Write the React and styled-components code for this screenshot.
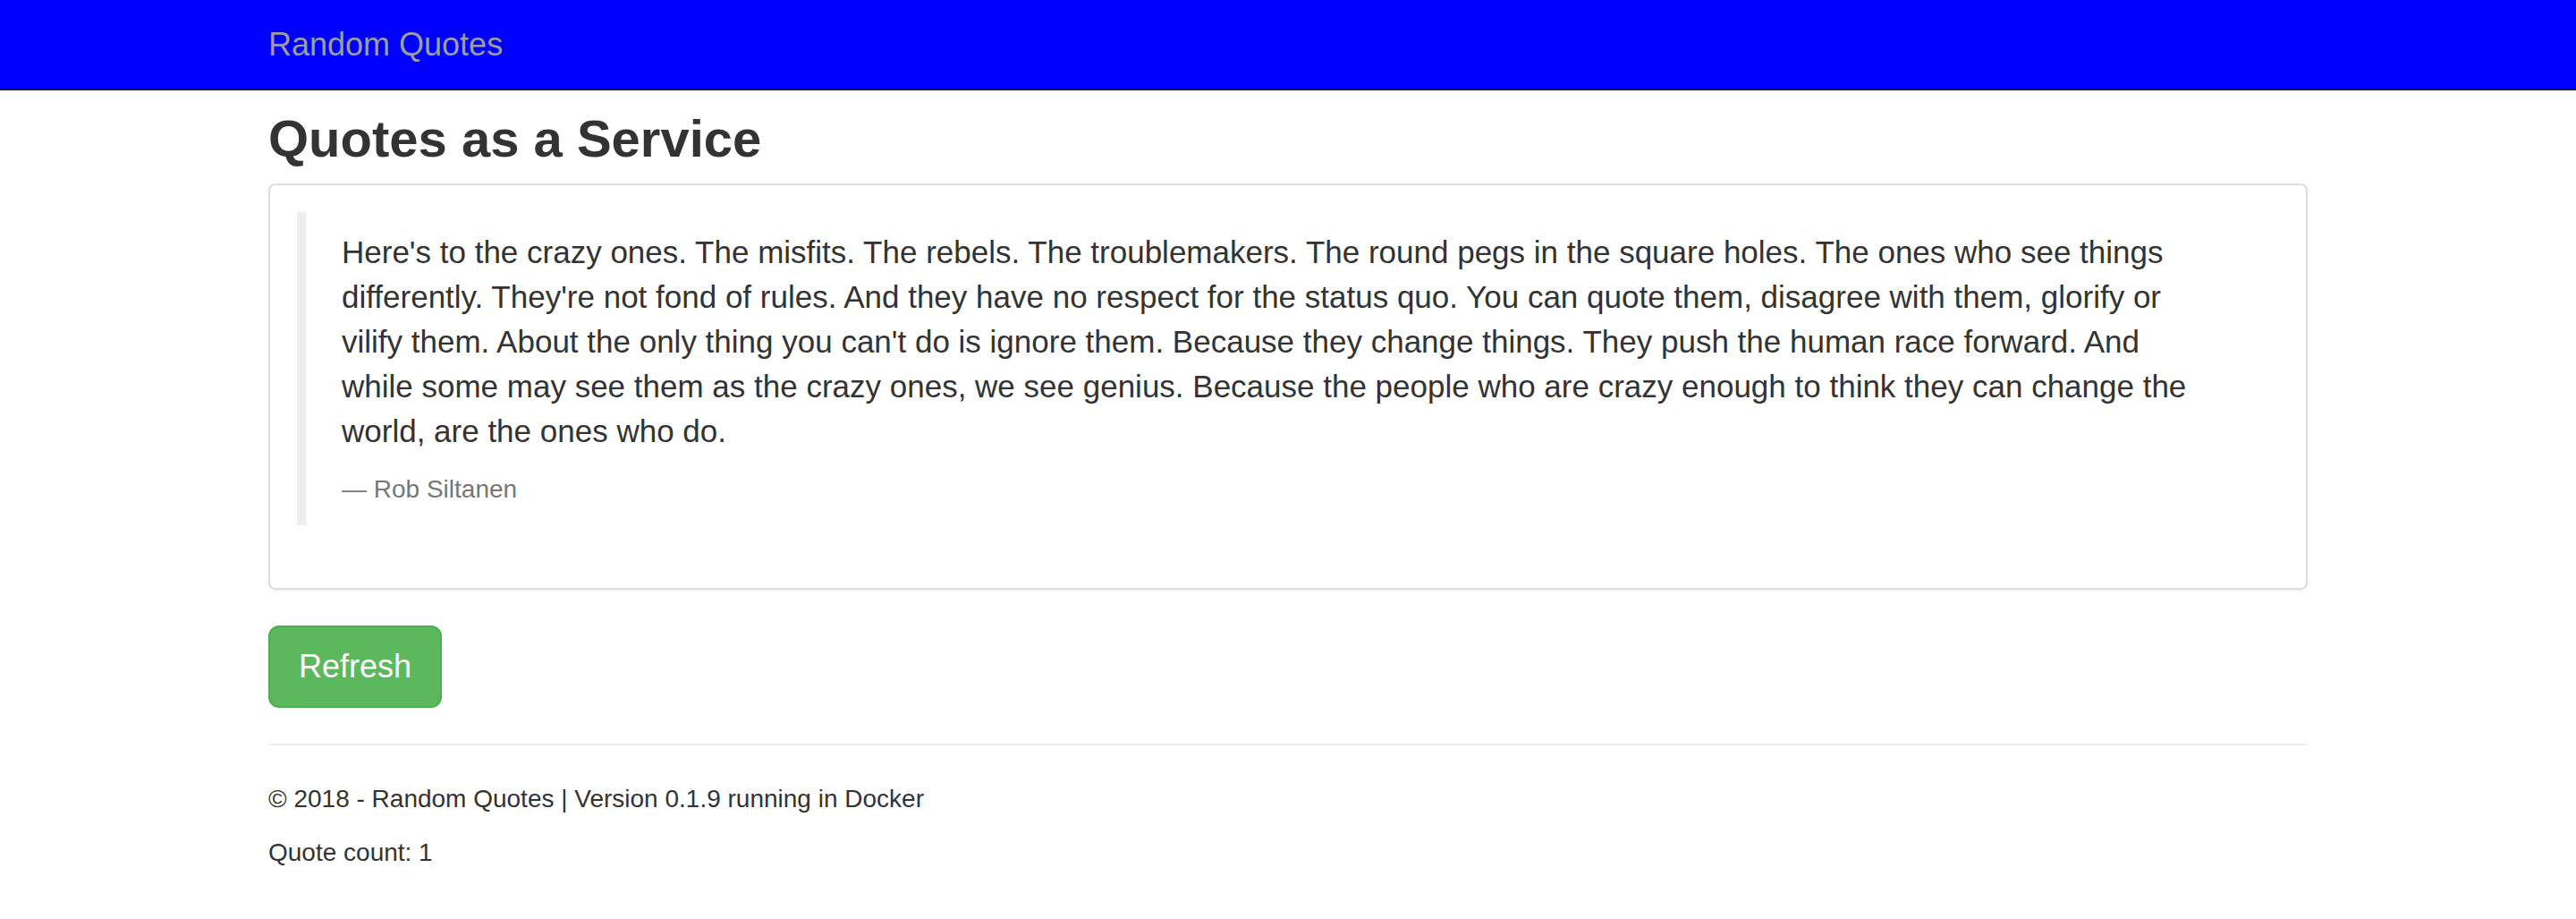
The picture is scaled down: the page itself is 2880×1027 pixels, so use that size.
import React from 'react'
import styled, { createGlobalStyle } from 'styled-components'

const GlobalStyle = createGlobalStyle`
  * { box-sizing: border-box; }
  body {
    margin: 0;
    font-family: "Liberation Sans", Helvetica, Arial, sans-serif;
    font-size: 28px;
    line-height: 1.42857143;
    color: #333;
    background: #fff;
  }
`

const Navbar = styled.nav`
  min-height: 99px;
  background-color: #0000ff;
  border-bottom: 2px solid #080808;
`

const Container = styled.div`
  width: 2340px;
  margin: 0 auto;
  padding: 0 30px;
`

const Brand = styled.a`
  display: block;
  height: 99px;
  padding: 30px 0;
  font-size: 36px;
  line-height: 40px;
  color: #9d9d9d;
  text-decoration: none;
`

const Title = styled.h1`
  margin: 22px 0 18px;
  font-size: 58px;
  font-weight: 700;
  line-height: 1.1;
  color: #333;
`

const Panel = styled.div`
  margin-bottom: 40px;
  background: #fff;
  border: 2px solid #ddd;
  border-radius: 8px;
  box-shadow: 0 2px 2px rgba(0, 0, 0, 0.05);
`

const PanelBody = styled.div`
  padding: 30px;
`

const Quote = styled.blockquote`
  margin: 0 0 40px;
  padding: 20px 40px;
  border-left: 10px solid #eee;
  font-size: 35px;
`

// the reference font is a hair wider than Liberation Sans, so narrow the measure to keep its line breaks
const QuoteText = styled.p`
  max-width: 2075px;
  margin: 0 0 20px;
`

const QuoteFooter = styled.footer`
  display: block;
  font-size: 80%;
  line-height: 1.42857143;
  color: #777;

  &::before {
    content: '\\2014 \\00A0';
  }
`

const Button = styled.button`
  display: inline-block;
  padding: 20px 32px;
  font-family: inherit;
  font-size: 36px;
  line-height: 48px;
  color: #fff;
  background-color: #5cb85c;
  border: 2px solid #4cae4c;
  border-radius: 12px;
  cursor: pointer;
`

const Divider = styled.hr`
  margin: 40px 0;
  border: 0;
  border-top: 2px solid #eee;
`

const FooterText = styled.p`
  margin: 0 0 20px;
`

const quote =
  "Here's to the crazy ones. The misfits. The rebels. The troublemakers. The round pegs in the square holes. The ones who see things differently. They're not fond of rules. And they have no respect for the status quo. You can quote them, disagree with them, glorify or vilify them. About the only thing you can't do is ignore them. Because they change things. They push the human race forward. And while some may see them as the crazy ones, we see genius. Because the people who are crazy enough to think they can change the world, are the ones who do."

export default function App() {
  return (
    <>
      <GlobalStyle />
      <Navbar>
        <Container>
          <Brand href="#">Random Quotes</Brand>
        </Container>
      </Navbar>
      <Container>
        <Title>Quotes as a Service</Title>
        <Panel>
          <PanelBody>
            <Quote>
              <QuoteText>{quote}</QuoteText>
              <QuoteFooter>Rob Siltanen</QuoteFooter>
            </Quote>
          </PanelBody>
        </Panel>
        <Button type="button">Refresh</Button>
        <Divider />
        <FooterText>© 2018 - Random Quotes | Version 0.1.9 running in Docker</FooterText>
        <FooterText>Quote count: 1</FooterText>
      </Container>
    </>
  )
}
